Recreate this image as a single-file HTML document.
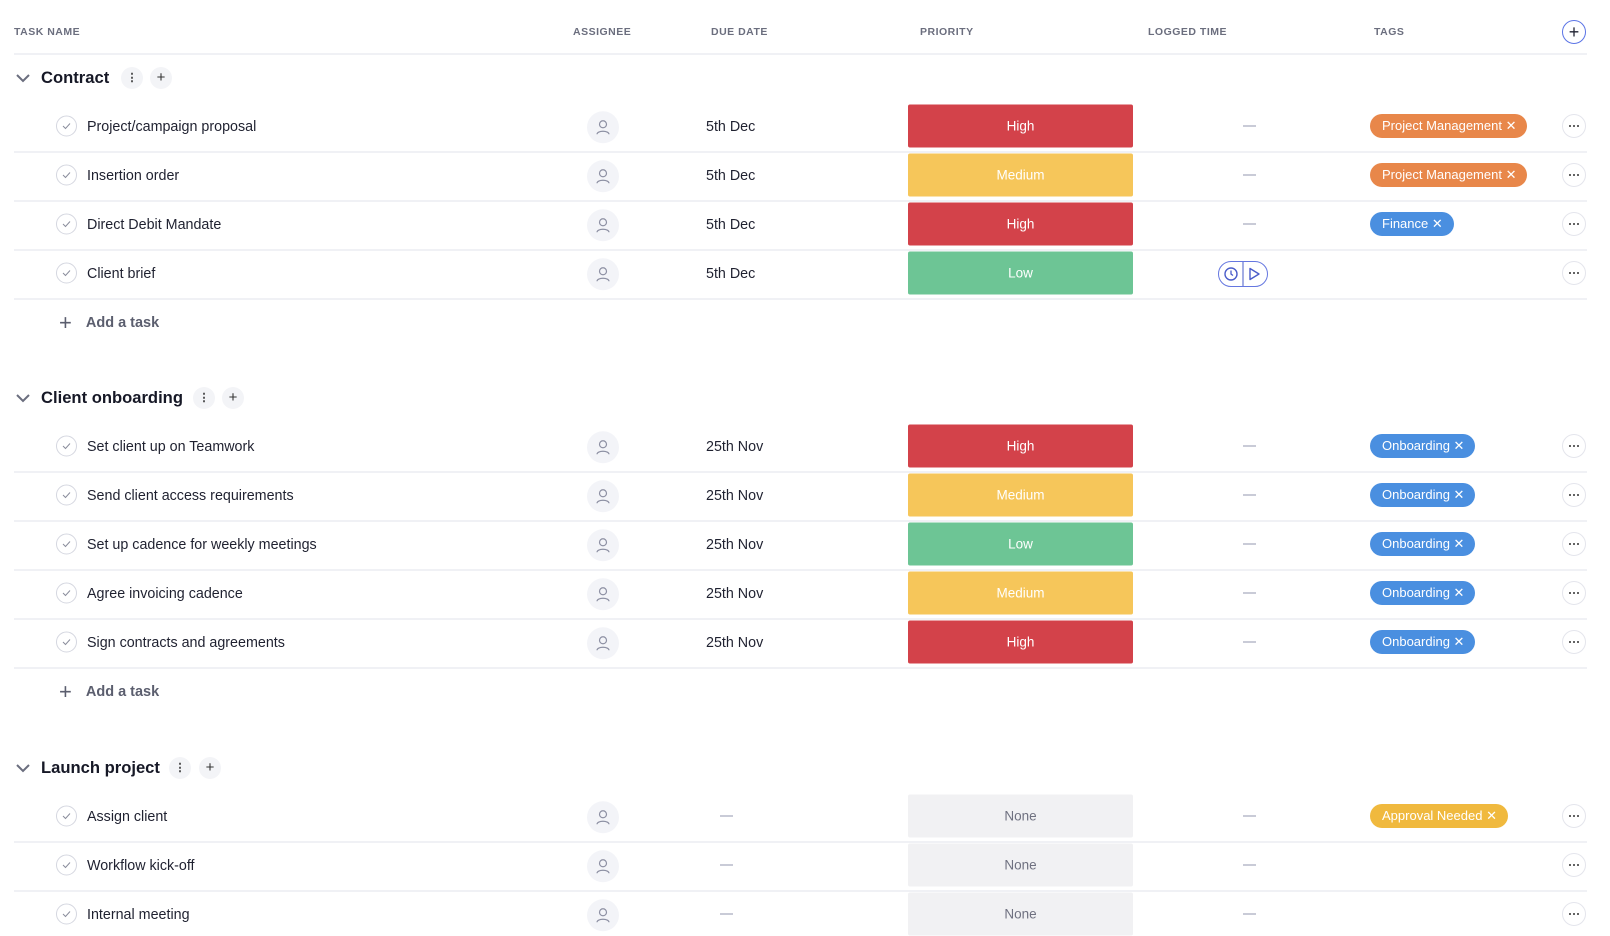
<!DOCTYPE html>
<html><head><meta charset="utf-8"><style>
body{margin:0;width:1610px;height:926px;background:#fff;font-family:"Liberation Sans",sans-serif;color:#1f2130;position:relative;overflow:hidden}
.a{position:absolute}
.h{position:absolute;top:26px;font-size:10.5px;font-weight:bold;color:#6b6e7e;letter-spacing:.5px}
.line{position:absolute;left:14px;width:1573px;height:2px;background:#f0f1f5}
.g{position:absolute;left:41px;font-size:16.6px;font-weight:bold;color:#161826;transform:translateY(-50%)}
.chev{position:absolute;left:15px;width:16px;height:10px}
.ib{position:absolute;width:22px;height:22px;border-radius:50%;background:#f3f4f7;transform:translate(-50%,-50%);font-size:15px;text-align:center;line-height:22px;color:#333}
.ck{position:absolute;left:56px;width:19px;height:19px;border:1px solid #d5d7e0;border-radius:50%;transform:translateY(-50%)}
.ck svg{position:absolute;left:5px;top:6px}
.t{position:absolute;left:87px;font-size:14.3px;transform:translateY(-45%)}
.as{position:absolute;left:587px;width:32px;height:32px;border-radius:50%;background:#f3f4f8;transform:translateY(-46%)}
.as svg{position:absolute;left:9px;top:8px}
.d{position:absolute;left:706px;font-size:14.3px;transform:translateY(-45%)}
.p{position:absolute;left:908px;width:225px;height:43px;border-radius:2px;color:#fff;font-size:13.5px;text-align:center;line-height:43px;transform:translateY(-50%)}
.hi{background:#d3424a}.me{background:#f6c65a}.lo{background:#6dc595}.no{background:#f1f1f3;color:#6f7180}
.ds{position:absolute;width:13px;height:2px;background:#c9cbd7}
.tag{position:absolute;left:1370px;height:24px;border-radius:12px;color:#fff;font-size:13px;line-height:24px;padding:0 11px 0 12px;transform:translateY(-50%);white-space:nowrap}
.or{background:#e8874a}.bl{background:#4a8fe0}.ye{background:#f0b93e}
.mo{position:absolute;left:1562px;width:22px;height:22px;border:1px solid #e4e5ec;border-radius:50%;transform:translateY(-50%)}
.mo::after{content:"";position:absolute;left:6px;top:10px;width:2px;height:2px;background:#333;border-radius:1px;box-shadow:4px 0 #333,8px 0 #333}
.add{position:absolute;left:59px;font-size:14.5px;color:#5b5e6e;font-weight:bold;transform:translateY(-50%)}
.add span{font-size:22px;font-weight:normal;margin-right:14px;vertical-align:-3px}
</style></head><body>
<div class="h" style="left:14px">TASK NAME</div>
<div class="h" style="left:573px">ASSIGNEE</div>
<div class="h" style="left:711px">DUE DATE</div>
<div class="h" style="left:920px">PRIORITY</div>
<div class="h" style="left:1148px">LOGGED TIME</div>
<div class="h" style="left:1374px">TAGS</div>
<div class="a" style="left:1562px;top:20px;width:22px;height:22px;border:1px solid #5b74e6;border-radius:50%;text-align:center;line-height:22px;font-size:18px">+</div>
<div class="line" style="top:53px"></div>

<!-- Group 1 -->
<svg class="chev" style="top:73px" viewBox="0 0 16 10"><path d="M2 2l6 6 6-6" stroke="#6b6e7e" stroke-width="2" fill="none"/></svg>
<div class="g" style="top:78px">Contract</div>
<div class="ib" style="left:132px;top:78px;font-size:11px;font-weight:bold">⋮</div>
<div class="ib" style="left:161px;top:78px">+</div>

<div class="ck" style="top:126px"><svg width="9" height="7"><path d="M1 3.5l2.5 2.5L8 1" stroke="#8a8d9c" fill="none"/></svg></div>
<div class="t" style="top:126px">Project/campaign proposal</div>
<div class="as" style="top:126px"><svg width="14" height="16"><circle cx="7" cy="5" r="3.5" stroke="#8d90a3" fill="none" stroke-width="1.2"/><path d="M1 15c0-4 12-4 12 0" stroke="#8d90a3" fill="none" stroke-width="1.2"/></svg></div>
<div class="d" style="top:126px">5th Dec</div>
<div class="p hi" style="top:126px">High</div>
<div class="ds" style="left:1243px;top:125px"></div>
<div class="tag or" style="top:126px">Project Management ✕</div>
<div class="mo" style="top:126px"></div>
<div class="line" style="top:151px"></div>

<div class="ck" style="top:175px"><svg width="9" height="7"><path d="M1 3.5l2.5 2.5L8 1" stroke="#8a8d9c" fill="none"/></svg></div>
<div class="t" style="top:175px">Insertion order</div>
<div class="as" style="top:175px"><svg width="14" height="16"><circle cx="7" cy="5" r="3.5" stroke="#8d90a3" fill="none" stroke-width="1.2"/><path d="M1 15c0-4 12-4 12 0" stroke="#8d90a3" fill="none" stroke-width="1.2"/></svg></div>
<div class="d" style="top:175px">5th Dec</div>
<div class="p me" style="top:175px">Medium</div>
<div class="ds" style="left:1243px;top:174px"></div>
<div class="tag or" style="top:175px">Project Management ✕</div>
<div class="mo" style="top:175px"></div>
<div class="line" style="top:200px"></div>

<div class="ck" style="top:224px"><svg width="9" height="7"><path d="M1 3.5l2.5 2.5L8 1" stroke="#8a8d9c" fill="none"/></svg></div>
<div class="t" style="top:224px">Direct Debit Mandate</div>
<div class="as" style="top:224px"><svg width="14" height="16"><circle cx="7" cy="5" r="3.5" stroke="#8d90a3" fill="none" stroke-width="1.2"/><path d="M1 15c0-4 12-4 12 0" stroke="#8d90a3" fill="none" stroke-width="1.2"/></svg></div>
<div class="d" style="top:224px">5th Dec</div>
<div class="p hi" style="top:224px">High</div>
<div class="ds" style="left:1243px;top:223px"></div>
<div class="tag bl" style="top:224px">Finance ✕</div>
<div class="mo" style="top:224px"></div>
<div class="line" style="top:249px"></div>

<div class="ck" style="top:273px"><svg width="9" height="7"><path d="M1 3.5l2.5 2.5L8 1" stroke="#8a8d9c" fill="none"/></svg></div>
<div class="t" style="top:273px">Client brief</div>
<div class="as" style="top:273px"><svg width="14" height="16"><circle cx="7" cy="5" r="3.5" stroke="#8d90a3" fill="none" stroke-width="1.2"/><path d="M1 15c0-4 12-4 12 0" stroke="#8d90a3" fill="none" stroke-width="1.2"/></svg></div>
<div class="d" style="top:273px">5th Dec</div>
<div class="p lo" style="top:273px">Low</div>
<svg class="a" style="left:1218px;top:261px" width="50" height="26"><rect x="0.5" y="0.5" width="49" height="25" rx="12.5" fill="none" stroke="#6577e0"/><line x1="25" y1="1" x2="25" y2="25" stroke="#4a5cc9"/><circle cx="13" cy="13" r="6" fill="none" stroke="#4a5cc9" stroke-width="1.4"/><path d="M13 9.5v3.5l2 1.5" stroke="#4a5cc9" fill="none" stroke-width="1.3"/><path d="M32 7.5v11l9-5.5z" fill="none" stroke="#4a5cc9" stroke-width="1.4" stroke-linejoin="round"/></svg>
<div class="mo" style="top:273px"></div>
<div class="line" style="top:298px"></div>
<div class="add" style="top:323px"><span>+</span>Add a task</div>

<!-- Group 2 -->
<svg class="chev" style="top:393px" viewBox="0 0 16 10"><path d="M2 2l6 6 6-6" stroke="#6b6e7e" stroke-width="2" fill="none"/></svg>
<div class="g" style="top:398px">Client onboarding</div>
<div class="ib" style="left:204px;top:398px;font-size:11px;font-weight:bold">⋮</div>
<div class="ib" style="left:233px;top:398px">+</div>

<div class="ck" style="top:446px"><svg width="9" height="7"><path d="M1 3.5l2.5 2.5L8 1" stroke="#8a8d9c" fill="none"/></svg></div>
<div class="t" style="top:446px">Set client up on Teamwork</div>
<div class="as" style="top:446px"><svg width="14" height="16"><circle cx="7" cy="5" r="3.5" stroke="#8d90a3" fill="none" stroke-width="1.2"/><path d="M1 15c0-4 12-4 12 0" stroke="#8d90a3" fill="none" stroke-width="1.2"/></svg></div>
<div class="d" style="top:446px">25th Nov</div>
<div class="p hi" style="top:446px">High</div>
<div class="ds" style="left:1243px;top:445px"></div>
<div class="tag bl" style="top:446px">Onboarding ✕</div>
<div class="mo" style="top:446px"></div>
<div class="line" style="top:471px"></div>

<div class="ck" style="top:495px"><svg width="9" height="7"><path d="M1 3.5l2.5 2.5L8 1" stroke="#8a8d9c" fill="none"/></svg></div>
<div class="t" style="top:495px">Send client access requirements</div>
<div class="as" style="top:495px"><svg width="14" height="16"><circle cx="7" cy="5" r="3.5" stroke="#8d90a3" fill="none" stroke-width="1.2"/><path d="M1 15c0-4 12-4 12 0" stroke="#8d90a3" fill="none" stroke-width="1.2"/></svg></div>
<div class="d" style="top:495px">25th Nov</div>
<div class="p me" style="top:495px">Medium</div>
<div class="ds" style="left:1243px;top:494px"></div>
<div class="tag bl" style="top:495px">Onboarding ✕</div>
<div class="mo" style="top:495px"></div>
<div class="line" style="top:520px"></div>

<div class="ck" style="top:544px"><svg width="9" height="7"><path d="M1 3.5l2.5 2.5L8 1" stroke="#8a8d9c" fill="none"/></svg></div>
<div class="t" style="top:544px">Set up cadence for weekly meetings</div>
<div class="as" style="top:544px"><svg width="14" height="16"><circle cx="7" cy="5" r="3.5" stroke="#8d90a3" fill="none" stroke-width="1.2"/><path d="M1 15c0-4 12-4 12 0" stroke="#8d90a3" fill="none" stroke-width="1.2"/></svg></div>
<div class="d" style="top:544px">25th Nov</div>
<div class="p lo" style="top:544px">Low</div>
<div class="ds" style="left:1243px;top:543px"></div>
<div class="tag bl" style="top:544px">Onboarding ✕</div>
<div class="mo" style="top:544px"></div>
<div class="line" style="top:569px"></div>

<div class="ck" style="top:593px"><svg width="9" height="7"><path d="M1 3.5l2.5 2.5L8 1" stroke="#8a8d9c" fill="none"/></svg></div>
<div class="t" style="top:593px">Agree invoicing cadence</div>
<div class="as" style="top:593px"><svg width="14" height="16"><circle cx="7" cy="5" r="3.5" stroke="#8d90a3" fill="none" stroke-width="1.2"/><path d="M1 15c0-4 12-4 12 0" stroke="#8d90a3" fill="none" stroke-width="1.2"/></svg></div>
<div class="d" style="top:593px">25th Nov</div>
<div class="p me" style="top:593px">Medium</div>
<div class="ds" style="left:1243px;top:592px"></div>
<div class="tag bl" style="top:593px">Onboarding ✕</div>
<div class="mo" style="top:593px"></div>
<div class="line" style="top:618px"></div>

<div class="ck" style="top:642px"><svg width="9" height="7"><path d="M1 3.5l2.5 2.5L8 1" stroke="#8a8d9c" fill="none"/></svg></div>
<div class="t" style="top:642px">Sign contracts and agreements</div>
<div class="as" style="top:642px"><svg width="14" height="16"><circle cx="7" cy="5" r="3.5" stroke="#8d90a3" fill="none" stroke-width="1.2"/><path d="M1 15c0-4 12-4 12 0" stroke="#8d90a3" fill="none" stroke-width="1.2"/></svg></div>
<div class="d" style="top:642px">25th Nov</div>
<div class="p hi" style="top:642px">High</div>
<div class="ds" style="left:1243px;top:641px"></div>
<div class="tag bl" style="top:642px">Onboarding ✕</div>
<div class="mo" style="top:642px"></div>
<div class="line" style="top:667px"></div>
<div class="add" style="top:692px"><span>+</span>Add a task</div>

<!-- Group 3 -->
<svg class="chev" style="top:763px" viewBox="0 0 16 10"><path d="M2 2l6 6 6-6" stroke="#6b6e7e" stroke-width="2" fill="none"/></svg>
<div class="g" style="top:768px">Launch project</div>
<div class="ib" style="left:180px;top:768px;font-size:11px;font-weight:bold">⋮</div>
<div class="ib" style="left:210px;top:768px">+</div>

<div class="ck" style="top:816px"><svg width="9" height="7"><path d="M1 3.5l2.5 2.5L8 1" stroke="#8a8d9c" fill="none"/></svg></div>
<div class="t" style="top:816px">Assign client</div>
<div class="as" style="top:816px"><svg width="14" height="16"><circle cx="7" cy="5" r="3.5" stroke="#8d90a3" fill="none" stroke-width="1.2"/><path d="M1 15c0-4 12-4 12 0" stroke="#8d90a3" fill="none" stroke-width="1.2"/></svg></div>
<div class="ds" style="left:720px;top:815px"></div>
<div class="p no" style="top:816px">None</div>
<div class="ds" style="left:1243px;top:815px"></div>
<div class="tag ye" style="top:816px">Approval Needed ✕</div>
<div class="mo" style="top:816px"></div>
<div class="line" style="top:841px"></div>

<div class="ck" style="top:865px"><svg width="9" height="7"><path d="M1 3.5l2.5 2.5L8 1" stroke="#8a8d9c" fill="none"/></svg></div>
<div class="t" style="top:865px">Workflow kick-off</div>
<div class="as" style="top:865px"><svg width="14" height="16"><circle cx="7" cy="5" r="3.5" stroke="#8d90a3" fill="none" stroke-width="1.2"/><path d="M1 15c0-4 12-4 12 0" stroke="#8d90a3" fill="none" stroke-width="1.2"/></svg></div>
<div class="ds" style="left:720px;top:864px"></div>
<div class="p no" style="top:865px">None</div>
<div class="ds" style="left:1243px;top:864px"></div>
<div class="mo" style="top:865px"></div>
<div class="line" style="top:890px"></div>

<div class="ck" style="top:914px"><svg width="9" height="7"><path d="M1 3.5l2.5 2.5L8 1" stroke="#8a8d9c" fill="none"/></svg></div>
<div class="t" style="top:914px">Internal meeting</div>
<div class="as" style="top:914px"><svg width="14" height="16"><circle cx="7" cy="5" r="3.5" stroke="#8d90a3" fill="none" stroke-width="1.2"/><path d="M1 15c0-4 12-4 12 0" stroke="#8d90a3" fill="none" stroke-width="1.2"/></svg></div>
<div class="ds" style="left:720px;top:913px"></div>
<div class="p no" style="top:914px">None</div>
<div class="ds" style="left:1243px;top:913px"></div>
<div class="mo" style="top:914px"></div>
</body></html>
